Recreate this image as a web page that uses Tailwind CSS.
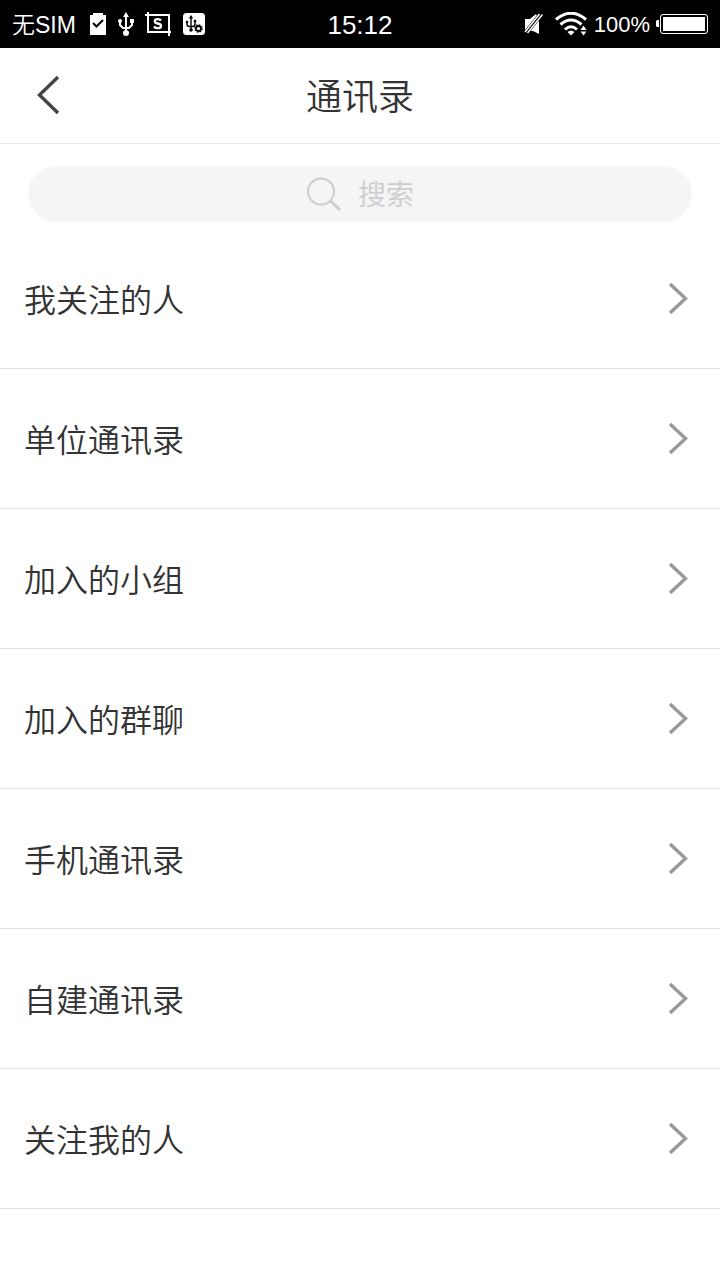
<!DOCTYPE html>
<html lang="zh-CN">
<head>
    <meta charset="UTF-8">
    <meta name="viewport" content="width=device-width, initial-scale=1.0">
    <title>通讯录</title>
    <script src="https://cdn.jsdelivr.net/npm/@tailwindcss/browser@4"></script>
</head>
<body class="bg-white min-h-screen font-[350] text-[#333333] font-['Liberation_Sans','Noto_Sans_CJK_SC',sans-serif]">
    <svg class="hidden">
        <symbol id="chevron" viewBox="0 0 20 32">
            <path d="M2 1 17.500 15.500 2 30" fill="none" stroke="#999999" stroke-width="3.400"/>
        </symbol>
    </svg>

    <!-- Status bar -->
    <div class="grid grid-cols-3 items-center h-12 px-3 bg-black text-white">
        <div class="flex items-center">
            <span class="w-16 pt-[2px] text-[23px] leading-8 whitespace-nowrap">无SIM</span>
            <svg class="ml-3 w-5 h-6" viewBox="0 0 20 24">
                <path d="M2 3h3V1h10v2h3v20H2z" fill="#fff"/>
                <path d="M5 11l3.500 3.500L15 8" fill="none" stroke="#000" stroke-width="2"/>
            </svg>
            <svg class="ml-2 w-5 h-6" viewBox="0 0 20 24">
                <path d="M10 3v18M4 9v4l3 3h6l3-3V9" fill="none" stroke="#fff" stroke-width="2"/>
                <path d="M10 0l3 5H7z" fill="#fff"/>
                <circle cx="10" cy="21" r="3" fill="#fff"/>
                <circle cx="4" cy="9" r="2" fill="#fff"/>
                <path d="M14 7h4v4h-4z" fill="#fff"/>
            </svg>
            <svg class="ml-2 w-7 h-6" viewBox="0 0 28 24">
                <path d="M1 3h24v21M4 0v20h23" fill="none" stroke="#fff" stroke-width="2"/>
                <path d="M17 8.500Q16 7.200 13.700 7.200Q10.800 7.200 10.800 9.300Q10.800 11 13.700 11.500Q17 12 17 14Q17 16.200 13.900 16.200Q11.200 16.200 10 14.500" fill="none" stroke="#fff" stroke-width="2.300"/>
            </svg>
            <svg class="ml-[11px] w-[22px] h-[22px]" viewBox="0 0 22 22">
                <rect width="22" height="22" rx="3.500" fill="#fff"/>
                <path d="M8 4v13M4 9v2q0 2.500 2.500 2.500h3Q12 13.500 12 11V8" fill="none" stroke="#000" stroke-width="1.400"/>
                <path d="M8 2l2.200 3.500H5.800z"/>
                <circle cx="8" cy="17" r="1.800"/>
                <circle cx="4" cy="9" r="1.300"/>
                <path d="M10.800 6.800h2.400v2.400h-2.400z"/>
                <circle cx="15.500" cy="15.500" r="2.500" fill="#fff" stroke="#000" stroke-width="1.800"/>
                <circle cx="15.500" cy="15.500" r="3.700" fill="none" stroke="#000" stroke-width="1.200" stroke-dasharray="1.500 1.400"/>
            </svg>
        </div>
        <div class="text-center text-[26px] leading-8 pt-[2px]">15:12</div>
        <div class="flex items-center justify-end">
            <svg class="w-5 h-6" viewBox="0 0 20 24">
                <path d="M2 7h5l6-5h3v20l-6-3H2z" fill="#fff"/>
                <path d="M1.500 22.500 19 1" stroke="#000" stroke-width="5"/>
                <path d="M11 0h9L16 6z"/>
                <path d="M2 20 16.500 2M4.500 21 19.500 2.500" stroke="#fff" stroke-width="1.500"/>
            </svg>
            <svg class="ml-3 w-8 h-6" viewBox="0 0 32 24">
                <path d="M1 7.500Q16-5 31 7.500M5.500 12.500Q16 3.500 26.500 12.500M10 17.500Q16 12 22 17.500" fill="none" stroke="#fff" stroke-width="3"/>
                <path d="M12.500 20q3.500-3 7 0L16 23.500z" fill="#fff"/>
                <path d="M25.500 18l3-4.500 3 4.500zM25.500 19.500h6l-3 4z" fill="#fff"/>
            </svg>
            <span class="ml-[7px] text-[22px] leading-8 pt-[2px]">100%</span>
            <svg class="ml-[5px] w-[53px] h-[22px]" viewBox="0 0 53 22">
                <path d="M4 7H2.500Q1 7 1 8.500v4Q1 14 2.500 14H4z" fill="#fff"/>
                <rect x="5.500" y="1.500" width="47" height="19" rx="2.500" fill="none" stroke="#fff"/>
                <rect x="8" y="4" width="42" height="14" fill="#fff"/>
            </svg>
        </div>
    </div>

    <header class="grid grid-cols-[96px_1fr_96px] items-center h-24 border-b border-[#e8e8e8]">
        <button type="button" aria-label="返回" class="flex items-center justify-center h-full">
            <svg class="w-6 h-10" viewBox="0 0 24 40"><path d="M22 1 3.500 19 22 37" fill="none" stroke="#444446" stroke-width="3.400"/></svg>
        </button>
        <h1 class="text-center text-[36px] leading-12 pt-1 font-[350]">通讯录</h1>
    </header>

    <div class="px-7 pt-[22px] pb-[7px]">
        <label class="flex items-center justify-center h-14 rounded-full bg-[#f4f5f7]">
            <svg class="w-9 h-9" viewBox="0 0 36 36" fill="none" stroke="#cccccc">
                <circle cx="15" cy="15.500" r="13" stroke-width="2"/>
                <path d="M24.500 25 34 34" stroke-width="3"/>
            </svg>
            <input type="text" aria-label="搜索" placeholder="搜索" class="ml-4 w-14 pt-1 text-[28px] leading-10 placeholder:text-[#cccccc] focus:outline-none">
        </label>
    </div>

    <nav>
        <a href="#" class="flex items-center justify-between h-[140px] pl-6 pr-8 border-b border-[#e0e0e0]">
            <span class="text-[32px] leading-12 pt-1">我关注的人</span>
            <svg class="w-5 h-8"><use href="#chevron"/></svg>
        </a>
        <a href="#" class="flex items-center justify-between h-[140px] pl-6 pr-8 border-b border-[#e0e0e0]">
            <span class="text-[32px] leading-12 pt-1">单位通讯录</span>
            <svg class="w-5 h-8"><use href="#chevron"/></svg>
        </a>
        <a href="#" class="flex items-center justify-between h-[140px] pl-6 pr-8 border-b border-[#e0e0e0]">
            <span class="text-[32px] leading-12 pt-1">加入的小组</span>
            <svg class="w-5 h-8"><use href="#chevron"/></svg>
        </a>
        <a href="#" class="flex items-center justify-between h-[140px] pl-6 pr-8 border-b border-[#e0e0e0]">
            <span class="text-[32px] leading-12 pt-1">加入的群聊</span>
            <svg class="w-5 h-8"><use href="#chevron"/></svg>
        </a>
        <a href="#" class="flex items-center justify-between h-[140px] pl-6 pr-8 border-b border-[#e0e0e0]">
            <span class="text-[32px] leading-12 pt-1">手机通讯录</span>
            <svg class="w-5 h-8"><use href="#chevron"/></svg>
        </a>
        <a href="#" class="flex items-center justify-between h-[140px] pl-6 pr-8 border-b border-[#e0e0e0]">
            <span class="text-[32px] leading-12 pt-1">自建通讯录</span>
            <svg class="w-5 h-8"><use href="#chevron"/></svg>
        </a>
        <a href="#" class="flex items-center justify-between h-[140px] pl-6 pr-8 border-b border-[#e0e0e0]">
            <span class="text-[32px] leading-12 pt-1">关注我的人</span>
            <svg class="w-5 h-8"><use href="#chevron"/></svg>
        </a>
    </nav>
</body>
</html>
